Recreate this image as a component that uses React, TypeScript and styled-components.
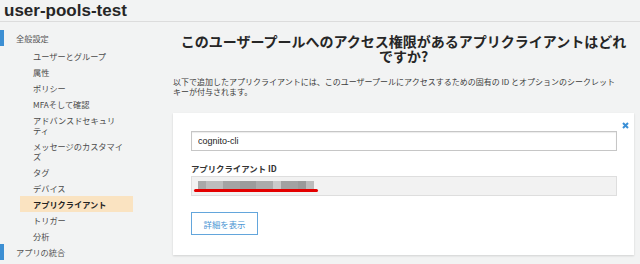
import React, { FC } from 'react';
import styled, { createGlobalStyle } from 'styled-components';

const GlobalStyle = createGlobalStyle`
  html, body {
    margin: 0;
    padding: 0;
    background: #f2f3f3;
  }
  body {
    font-family: 'Liberation Sans', 'Noto Sans CJK JP', sans-serif;
    color: #333;
  }
  * {
    box-sizing: border-box;
  }
`;

const StyledPage = styled.div`
  width: 640px;
  height: 264px;
  overflow: hidden;
  background: #f2f3f3;
`;

const StyledHeader = styled.header`
  height: 22px;
  border-bottom: 1px solid #dcdcdc;
  padding-left: 4px;
  display: flex;
  align-items: center;
`;

const StyledPoolName = styled.h1`
  margin: 0;
  font-size: 17px;
  line-height: 20px;
  font-weight: 700;
  color: #262626;
`;

const StyledBody = styled.div`
  display: flex;
  align-items: flex-start;
`;

const StyledSidebar = styled.nav`
  width: 168px;
  flex-shrink: 0;
  padding-top: 8px;
  font-family: 'Noto Sans CJK JP', sans-serif;
  line-break: strict;
`;

const StyledSection = styled.div<{ $gap?: boolean }>`
  position: relative;
  height: 16px;
  line-height: 16px;
  padding-left: 16px;
  font-size: 8.2px;
  color: #555;
  margin-bottom: ${(p) => (p.$gap ? '2px' : '0')};

  &::before {
    content: '';
    position: absolute;
    left: 0;
    top: 0;
    width: 4px;
    height: 16px;
    background: #3d8fd3;
  }
`;

const StyledItem = styled.div<{ $active?: boolean }>`
  margin-left: 20px;
  width: 113px;
  padding: 3px 6px 3px 13px;
  font-size: 8.2px;
  line-height: 10px;
  color: ${(p) => (p.$active ? '#222' : '#4a4a4a')};
  font-weight: ${(p) => (p.$active ? 700 : 400)};
  background: ${(p) => (p.$active ? '#fae3c1' : 'transparent')};
`;

const StyledContent = styled.main`
  flex: 1;
  padding: 0 6px 0 5px;
`;

const StyledTitle = styled.h2`
  margin: 12px 0 0;
  padding: 0 5px;
  text-align: center;
  font-family: 'Noto Sans CJK JP', sans-serif;
  font-size: 14px;
  line-height: 15px;
  font-weight: 700;
  color: #262626;
`;

const StyledLead = styled.p`
  margin: 13px 0 0;
  font-family: 'Noto Sans CJK JP', sans-serif;
  font-size: 8px;
  line-height: 10px;
  color: #3c3c3c;
  white-space: nowrap;
`;

const StyledCard = styled.section`
  position: relative;
  margin-top: 16px;
  background: #fff;
  padding: 18px 17px 20px 18px;
  box-shadow: 0 1px 2px rgba(0, 0, 0, 0.14);
`;

const StyledClose = styled.button`
  position: absolute;
  top: 8px;
  right: 5px;
  width: 8px;
  height: 8px;
  padding: 0;
  border: none;
  background: none;
  color: #3a8fd6;
  display: flex;
  align-items: center;
  justify-content: center;
  cursor: pointer;
`;

const StyledInput = styled.input`
  display: block;
  width: 100%;
  height: 20px;
  padding: 0 6px;
  border: 1px solid #c6c6c6;
  box-shadow: inset 0 1px 1px rgba(0, 0, 0, 0.08);
  font-family: 'Liberation Sans', sans-serif;
  font-size: 9px;
  color: #222;
  outline: none;
`;

const StyledLabel = styled.label`
  display: block;
  margin: 12px 0 3px;
  font-family: 'Noto Sans CJK JP', sans-serif;
  font-size: 8.4px;
  line-height: 10px;
  font-weight: 700;
  color: #333;
`;

const StyledReadonly = styled.div`
  position: relative;
  height: 20px;
  padding: 4px 6px;
  background: #f2f2f2;
  border: 1px solid #dedede;
  display: flex;
`;

const StyledMosaic = styled.div<{ $w: number; $c: string }>`
  width: ${(p) => p.$w}px;
  height: 8px;
  background: ${(p) => p.$c};
`;

const StyledMark = styled.div`
  position: absolute;
  left: 2px;
  top: 12px;
  width: 124px;
  height: 3px;
  border-radius: 2px;
  background: #e40000;
`;

const StyledButton = styled.button`
  margin-top: 16px;
  width: 67px;
  height: 23px;
  background: #fff;
  border: 1px solid #63a6dc;
  color: #4a95d3;
  font-family: 'Noto Sans CJK JP', sans-serif;
  font-size: 8.4px;
  padding: 0;
  cursor: pointer;
`;

const menu = [
  'ユーザーとグループ',
  '属性',
  'ポリシー',
  'MFAそして確認',
  'アドバンスドセキュリティ',
  'メッセージのカスタマイズ',
  'タグ',
  'デバイス',
  'アプリクライアント',
  'トリガー',
  '分析',
];

const mosaic: [number, string][] = [
  [8, '#a9a9a9'],
  [17, '#bdbdbd'],
  [17, '#a4a4a4'],
  [16, '#9c9c9c'],
  [17, '#ababab'],
  [8, '#cacaca'],
  [17, '#a2a2a2'],
  [8, '#9a9a9a'],
  [8, '#bcbcbc'],
];

const App: FC = () => (
  <StyledPage lang="ja">
    <GlobalStyle />
    <StyledHeader>
      <StyledPoolName>user-pools-test</StyledPoolName>
    </StyledHeader>
    <StyledBody>
      <StyledSidebar>
        <StyledSection $gap>全般設定</StyledSection>
        {menu.map((m) => (
          <StyledItem key={m} $active={m === 'アプリクライアント'}>
            {m}
          </StyledItem>
        ))}
        <StyledSection>アプリの統合</StyledSection>
      </StyledSidebar>
      <StyledContent>
        <StyledTitle>
          このユーザープールへのアクセス権限があるアプリクライアントはどれですか?
        </StyledTitle>
        <StyledLead>
          以下で追加したアプリクライアントには、このユーザープールにアクセスするための固有の ID
          とオプションのシークレット
          <br />
          キーが付与されます。
        </StyledLead>
        <StyledCard>
          <StyledClose aria-label="close">
            <svg width="7" height="7" viewBox="0 0 7 7">
              <path
                d="M1 1 L6 6 M6 1 L1 6"
                stroke="currentColor"
                strokeWidth="2"
              />
            </svg>
          </StyledClose>
          <StyledInput defaultValue="cognito-cli" />
          <StyledLabel>アプリクライアント ID</StyledLabel>
          <StyledReadonly>
            {mosaic.map(([w, c], i) => (
              <StyledMosaic key={i} $w={w} $c={c} />
            ))}
            <StyledMark />
          </StyledReadonly>
          <StyledButton>詳細を表示</StyledButton>
        </StyledCard>
      </StyledContent>
    </StyledBody>
  </StyledPage>
);

export default App;
